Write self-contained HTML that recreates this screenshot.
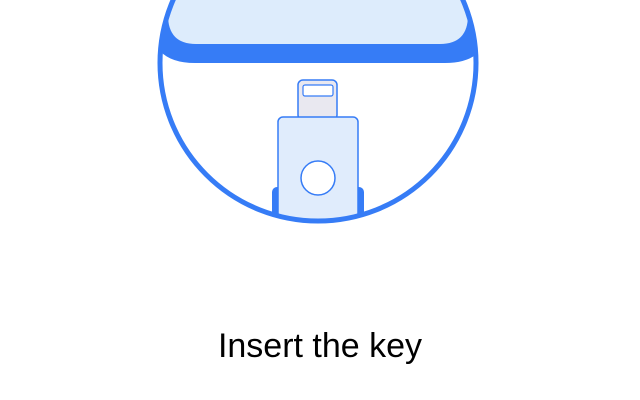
<!DOCTYPE html>
<html><head><style>
html,body{margin:0;padding:0;width:640px;height:400px;background:#fff;overflow:hidden}
.t{position:absolute;left:0;width:640px;top:326px;text-align:center;font-family:"Liberation Sans",sans-serif;font-size:34px;color:#000;line-height:40px}
</style></head><body>
<svg width="640" height="400" style="position:absolute;left:0;top:0">
<defs><clipPath id="c"><circle cx="318" cy="63" r="158"/></clipPath></defs>
<g clip-path="url(#c)">
<rect x="150" y="0" width="340" height="240" fill="#fff"/>
<path d="M150 -20 H490 V20 Q490 63 445 63 H195 Q150 63 150 20 Z" fill="#367cf6"/>
<path d="M168 -20 H468 V15 Q468 44 440 44 H196 Q168 44 168 15 Z" fill="#ddecfc"/>
<rect x="272" y="187" width="92" height="50" rx="5" fill="#367cf6"/>
<rect x="298" y="80" width="39" height="40" rx="5" fill="#e9e8f0" stroke="#367cf6" stroke-width="1.5"/>
<rect x="303" y="85" width="30" height="11" rx="2" fill="#fff" stroke="#367cf6" stroke-width="1.2"/>
<rect x="278" y="117" width="80" height="120" rx="5" fill="#e0ecfc" stroke="#367cf6" stroke-width="1.5"/>
<circle cx="318" cy="178" r="17" fill="#fff" stroke="#367cf6" stroke-width="1.5"/>
</g>
<circle cx="318" cy="63" r="158" fill="none" stroke="#367cf6" stroke-width="5"/>
</svg>
<div class="t">Insert the key</div>
</body></html>
